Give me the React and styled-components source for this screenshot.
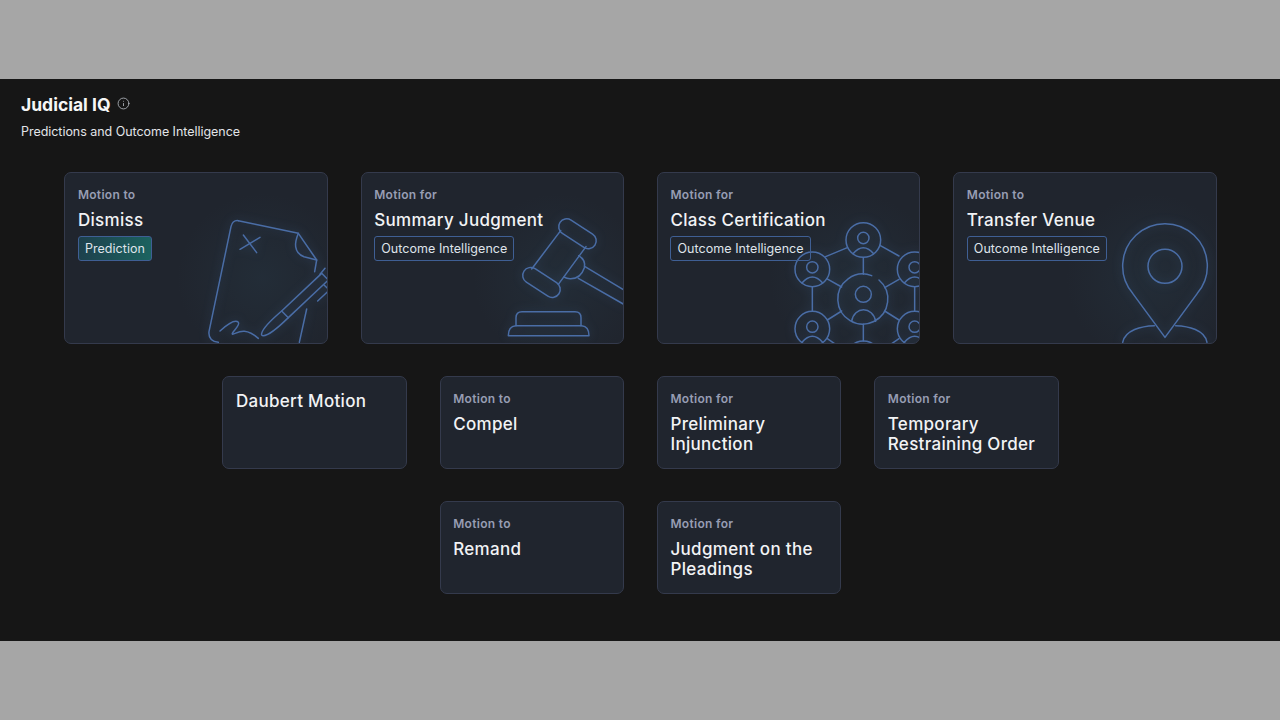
import styled, { createGlobalStyle } from 'styled-components';
import { Info } from 'lucide-react';

const Global = createGlobalStyle`
  html, body {
    margin: 0;
    background: #a6a6a6;
  }
  body {
    font-family: Inter, "Noto Sans", sans-serif;
  }
`;

const Band = styled.div`
  padding: 79px 0;
`;

const Panel = styled.main`
  height: 562px;
  box-sizing: border-box;
  background: #161616;
  padding-top: 14px;
`;

const Header = styled.header`
  padding-left: 21px;
  height: 79px;
`;

const TitleRow = styled.div`
  display: flex;
  align-items: center;
  gap: 6px;
  height: 24px;
`;

const PageTitle = styled.h1`
  margin: 0;
  font-size: 17.5px;
  line-height: 24px;
  font-weight: 700;
  letter-spacing: 0;
  color: #f6f6f6;
`;

const InfoIcon = styled(Info)`
  color: #b8bcc4;
  margin-top: -3px;
`;

const Subtitle = styled.p`
  margin: 6px 0 0;
  font-size: 12.5px;
  line-height: 18px;
  letter-spacing: -0.04px;
  color: #e2e4e8;
`;

const Rows = styled.div`
  display: flex;
  flex-direction: column;
  gap: 32px;
`;

const Row = styled.div`
  display: flex;
  justify-content: center;
  gap: 32.8px;
  padding-left: 1px;
`;

const Card = styled.article`
  position: relative;
  overflow: hidden;
  box-sizing: border-box;
  width: ${p => (p.$large ? '263.5px' : '184.5px')};
  height: ${p => (p.$large ? '172px' : '93px')};
  padding: 14px 12.6px;
  background: #20252e;
  border: 1px solid #343a4c;
  border-radius: 7px;
`;

const Eyebrow = styled.div`
  position: relative;
  z-index: 1;
  font-size: 12px;
  line-height: 16px;
  font-weight: 600;
  letter-spacing: 0.3px;
  color: #979db3;
  margin-bottom: 7px;
`;

const CardTitle = styled.h2`
  position: relative;
  z-index: 1;
  margin: 0;
  font-size: 17px;
  line-height: 20px;
  font-weight: 500;
  letter-spacing: 0.3px;
  color: #f2f3f5;
`;

const Badge = styled.span`
  position: relative;
  z-index: 1;
  display: inline-flex;
  align-items: center;
  box-sizing: border-box;
  height: 25px;
  margin-top: 6px;
  padding: 0 6px;
  font-size: 12.5px;
  letter-spacing: 0.05px;
  color: #dfe3ea;
  border: 1px solid #3f5f94;
  border-radius: 3px;
  background: ${p => (p.$teal ? 'linear-gradient(100deg, #1d3f4c, #1c6460)' : 'transparent')};
`;

const Art = styled.svg`
  position: absolute;
  left: ${p => p.$left}px;
  top: ${p => p.$top}px;
  fill: none;
  stroke: #4a6da6;
  stroke-width: 4.5;
  stroke-linecap: round;
  stroke-linejoin: round;
  filter: drop-shadow(0 0 5px rgba(80, 130, 190, 0.35));
`;

const Glow = styled.div`
  position: absolute;
  right: -20px;
  bottom: -20px;
  width: 170px;
  height: 170px;
  background: radial-gradient(closest-side, rgba(50, 85, 105, 0.16), rgba(50, 85, 105, 0));
`;

const DocumentArt = () => (
  <Art $left={115} $top={32} width="150" height="140" viewBox="0 0 450 420">
    <path d="M175 47 L355 85 L410 165 L404 200" />
    <path d="M175 47 Q158 45 153 65 L87 380 Q84 408 115 412" />
    <path d="M355 85 Q345 110 347 125 Q350 148 372 155 L410 165" />
    <path d="M180 133 L240 97 M190 90 L230 143" />
    <path d="M120 378 C140 360 165 342 175 352 C183 362 150 385 158 388 C175 382 195 365 235 400" />
    <path d="M245 385 Q250 365 305 318 L425 205 L445 225 L325 338 Q270 392 250 392 Q243 392 245 385 Z" />
    <path d="M305 318 L325 338 M420 208 L435 190 M432 240 L448 255" />
    <path d="M380 312 L358 412 M413 288 L445 258" />
  </Art>
);

const GavelArt = () => (
  <Art $left={-12} $top={-8} width="290" height="185" viewBox="0 0 870 555">
    <rect x="620" y="182" width="125" height="48" rx="24" transform="rotate(33 682 206)" />
    <rect x="512" y="328" width="125" height="48" rx="24" transform="rotate(33 574 352)" />
    <path d="M632 197 L545 312 M708 245 L625 358" />
    <path d="M686 272 Q708 285 703 308 Q692 342 660 341 Q650 341 642 336" />
    <path d="M705 305 L825 377 M685 340 L825 420" />
    <path d="M498 482 L498 458 Q498 440 516 440 L675 440 Q693 440 693 458 L693 482" />
    <path d="M475 512 L717 512 Q717 484 695 482 L497 482 Q475 484 475 512 Z" />
  </Art>
);

const people = [
  [643, 222],
  [490, 310],
  [797, 310],
  [490, 488],
  [797, 488],
  [643, 577],
];

const NetworkArt = () => (
  <Art $left={-8.5} $top={-7} width="280" height="185" viewBox="0 0 840 555">
    {people.map(([x, y]) => (
      <g key={`${x}-${y}`}>
        <circle cx={x} cy={y} r="52" />
        <circle cx={x} cy={y - 6} r="17" />
        <path d={`M${x - 31} ${y + 41} Q${x} ${y + 5} ${x + 31} ${y + 41}`} />
      </g>
    ))}
    <path d="M668 329 A75 75 0 1 0 690 342" />
    <circle cx="643" cy="385" r="24" />
    <path d="M608 466 C615 420 672 420 680 466" />
    <path d="M643 275 L643 325 M595 245 L530 272 M693 238 L750 270 M533 338 L578 363 M750 340 L707 365" />
    <path d="M490 362 L490 436 M797 362 L797 436 M578 435 L535 462 M707 435 L750 462 M643 475 L643 525 M535 518 L560 535 M750 518 L725 535" />
  </Art>
);

const PinArt = () => (
  <Art $left={-9} $top={-8} width="280" height="185" viewBox="0 0 840 555">
    <path d="M660 517 L563 385 A127 127 0 1 1 757 385 Z" />
    <circle cx="660" cy="304" r="51" />
    <path d="M533 532 C540 495 590 483 628 482 M692 482 C730 483 780 495 786 532" />
  </Art>
);

const topCards = [
  { prefix: 'Motion to', title: 'Dismiss', badge: 'Prediction', teal: true, art: <DocumentArt /> },
  { prefix: 'Motion for', title: 'Summary Judgment', badge: 'Outcome Intelligence', art: <GavelArt /> },
  { prefix: 'Motion for', title: 'Class Certification', badge: 'Outcome Intelligence', art: <NetworkArt /> },
  { prefix: 'Motion to', title: 'Transfer Venue', badge: 'Outcome Intelligence', art: <PinArt /> },
];

const middleCards = [
  { title: 'Daubert Motion' },
  { prefix: 'Motion to', title: 'Compel' },
  { prefix: 'Motion for', title: <>Preliminary<br />Injunction</> },
  { prefix: 'Motion for', title: <>Temporary<br />Restraining Order</> },
];

const bottomCards = [
  { prefix: 'Motion to', title: 'Remand' },
  { prefix: 'Motion for', title: <>Judgment on the<br />Pleadings</> },
];

const MotionCard = ({ prefix, title, badge, teal, art, large }) => (
  <Card $large={large}>
    {art && <Glow />}
    {art}
    {prefix && <Eyebrow>{prefix}</Eyebrow>}
    <CardTitle>{title}</CardTitle>
    {badge && <Badge $teal={teal}>{badge}</Badge>}
  </Card>
);

const App = () => (
  <Band>
    <Global />
    <Panel>
      <Header>
        <TitleRow>
          <PageTitle>Judicial IQ</PageTitle>
          <InfoIcon size={13} strokeWidth={1.5} />
        </TitleRow>
        <Subtitle>Predictions and Outcome Intelligence</Subtitle>
      </Header>
      <Rows>
        <Row>
          {topCards.map((c, i) => <MotionCard key={i} large {...c} />)}
        </Row>
        <Row>
          {middleCards.map((c, i) => <MotionCard key={i} {...c} />)}
        </Row>
        <Row>
          {bottomCards.map((c, i) => <MotionCard key={i} {...c} />)}
        </Row>
      </Rows>
    </Panel>
  </Band>
);

export default App;
